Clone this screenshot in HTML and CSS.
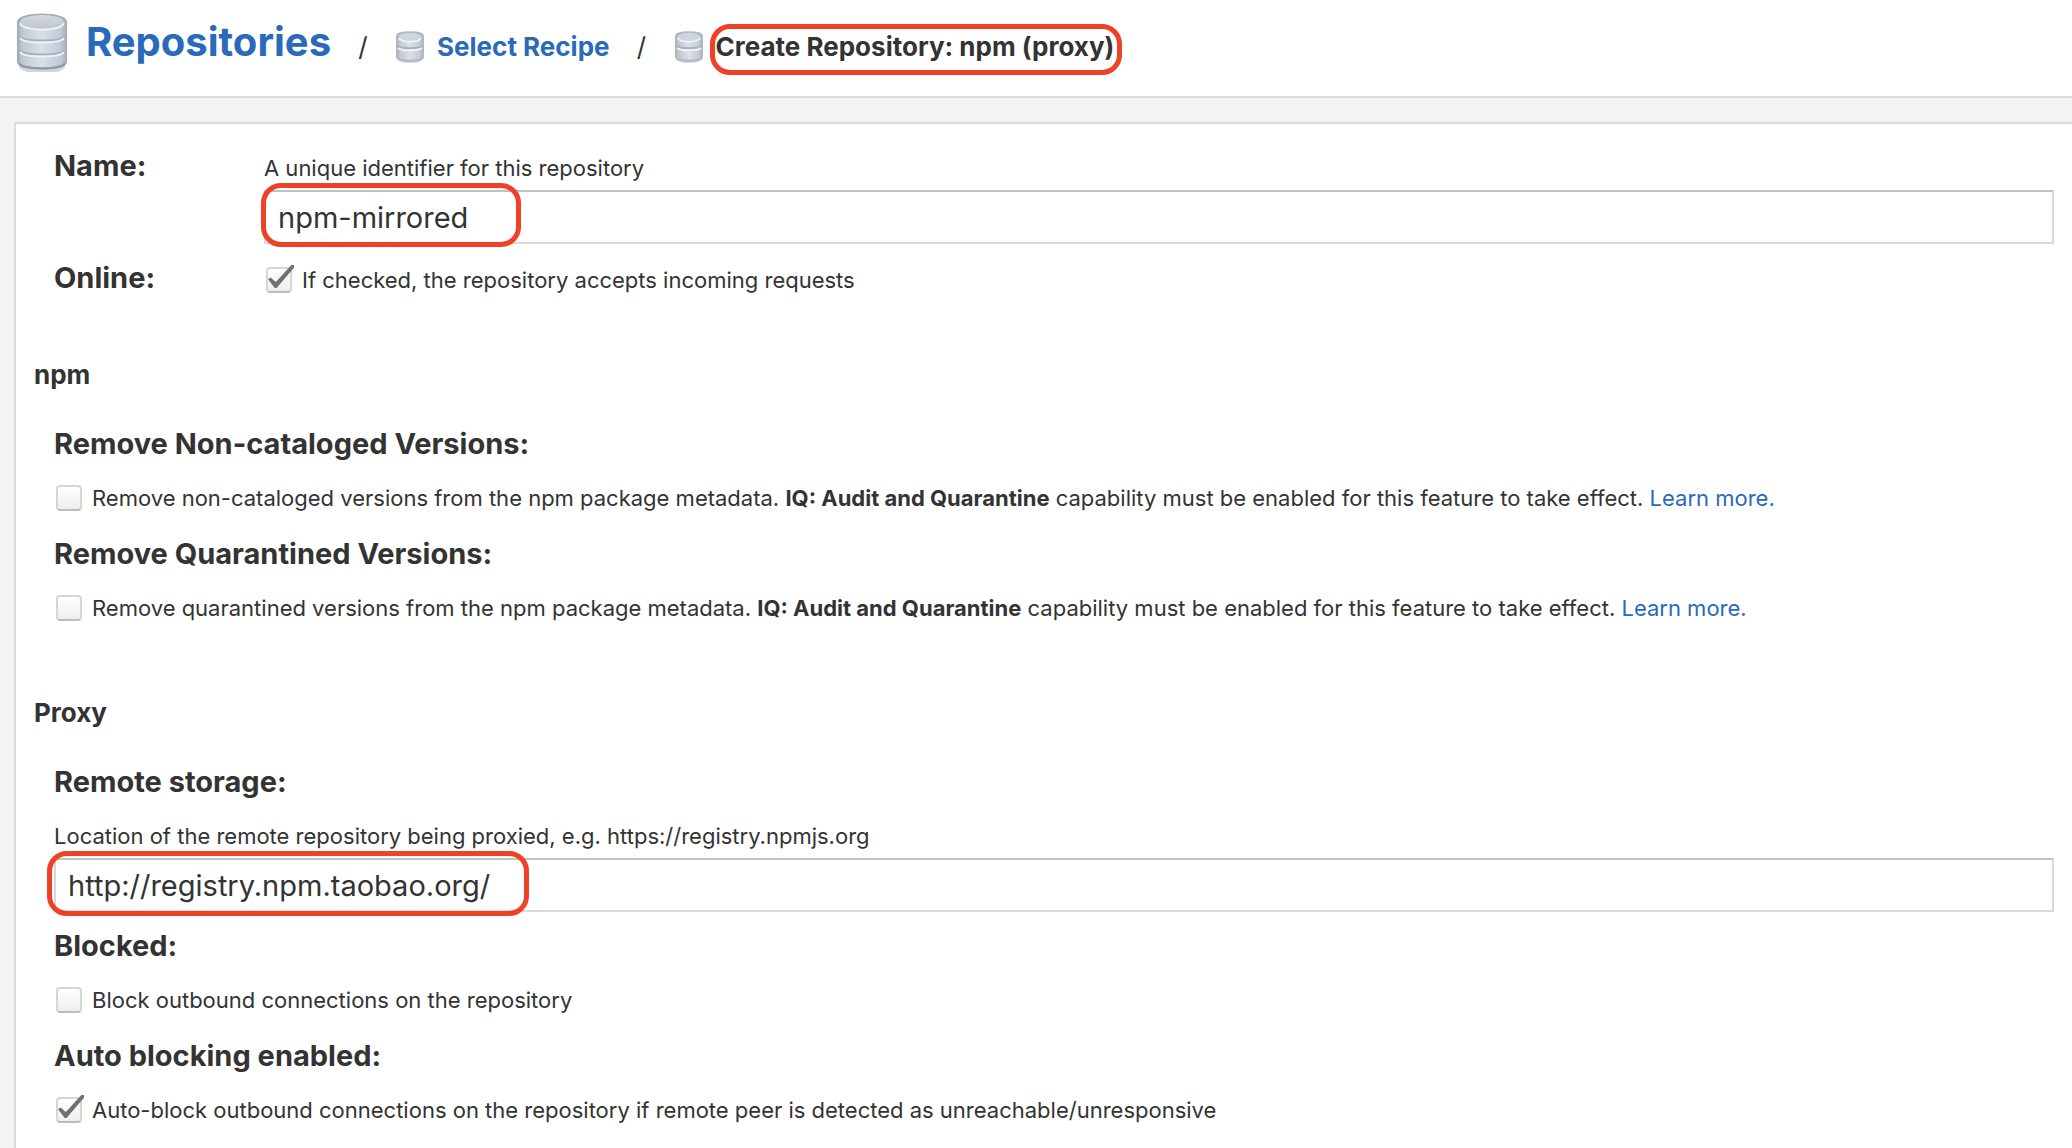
FILE: index.html
```html
<!DOCTYPE html>
<html lang="en">
<head>
<meta charset="utf-8">
<title>Create Repository: npm (proxy)</title>
<link rel="stylesheet" href="styles.css">
</head>
<body>
<svg class="defs" aria-hidden="true">
  <defs>
    <linearGradient id="side" x1="0" x2="1" y1="0" y2="0">
      <stop offset="0" stop-color="#adb5c0"/><stop offset="0.12" stop-color="#c3cad5"/><stop offset="0.5" stop-color="#dadfea"/><stop offset="0.88" stop-color="#c3cad5"/><stop offset="1" stop-color="#a9b2bc"/>
    </linearGradient>
    <linearGradient id="lid" x1="0" x2="0" y1="0" y2="1">
      <stop offset="0" stop-color="#d3d8de"/><stop offset="1" stop-color="#bcc6ce"/>
    </linearGradient>
  </defs>
  <symbol id="db-large" viewBox="0 0 52 60">
    <path d="M3 12v40c0 10 46 10 46 0V12z" fill="#7d8791" opacity=".35" transform="translate(0 2)"/>
    <path d="M2 10C2 0 50 0 50 10V50C50 59 2 59 2 50z" fill="url(#side)" stroke="#a3adb6" stroke-width="2"/>
    <ellipse cx="26" cy="10" rx="21" ry="7" fill="url(#lid)"/>
    <path d="M4 11c2 9 42 9 44 0" fill="none" stroke="#eef1f6" stroke-width="2"/>
    <g fill="none" stroke-width="2">
      <path d="M3 24c4 6 42 6 46 0M3 38c4 6 42 6 46 0" stroke="#a5afba"/>
      <path d="M4 26c4 6 40 6 44 0M4 40c4 6 40 6 44 0" stroke="#edf0f6"/>
      <path d="M3 51c2 7 44 7 46 0" stroke="#909aa3"/>
    </g>
  </symbol>
  <symbol id="db-small" viewBox="0 0 30 32">
    <path d="M2 8v18c0 7 26 7 26 0V8z" fill="#7d8791" opacity=".3" transform="translate(0 1)"/>
    <path d="M2 5C2 0 28 0 28 5V26C28 31 2 31 2 26z" fill="url(#side)" stroke="#b0b8c0" stroke-width="2"/>
    <ellipse cx="15" cy="6" rx="11" ry="4" fill="#cfd5dc"/>
    <path d="M4 7c2 5 20 5 22 0" fill="none" stroke="#eef1f6" stroke-width="2"/>
    <path d="M2 15c3 3 23 3 26 0" fill="none" stroke="#a9b2bc" stroke-width="2"/>
    <path d="M3 17c3 3 21 3 24 0" fill="none" stroke="#edf0f6" stroke-width="2"/>
  </symbol>
</svg>

<header class="header">
  <nav class="breadcrumb" aria-label="Breadcrumb">
    <a class="crumb crumb-root" href="#repositories"><svg class="icon-large" aria-hidden="true"><use href="#db-large"/></svg>Repositories</a>
    <span class="slash">/</span>
    <a class="crumb" href="#recipe"><svg class="icon-small" aria-hidden="true"><use href="#db-small"/></svg>Select Recipe</a>
    <span class="slash">/</span>
    <span class="crumb crumb-current"><svg class="icon-small" aria-hidden="true"><use href="#db-small"/></svg><span class="marked">Create Repository: npm (proxy)<span class="mark mark-title"></span></span></span>
  </nav>
</header>

<main class="panel">
  <form>
    <div class="row">
      <label class="label" for="name">Name:</label>
      <div>
        <div class="help">A unique identifier for this repository</div>
        <div class="marked"><input class="input" id="name" type="text" value="npm-mirrored"><span class="mark mark-name"></span></div>
      </div>
    </div>
    <div class="row">
      <div class="label">Online:</div>
      <label class="check"><input type="checkbox" checked><span class="help">If checked, the repository accepts incoming requests</span></label>
    </div>

    <section class="section">
      <h2 class="section-title">npm</h2>
      <div class="field">
        <div class="label">Remove Non-cataloged Versions:</div>
        <label class="check"><input type="checkbox"><span class="help">Remove non-cataloged versions from the npm package metadata. <b>IQ: Audit and Quarantine</b> capability must be enabled for this feature to take effect. <a href="#learn">Learn more.</a></span></label>
      </div>
      <div class="field">
        <div class="label">Remove Quarantined Versions:</div>
        <label class="check"><input type="checkbox"><span class="help">Remove quarantined versions from the npm package metadata. <b>IQ: Audit and Quarantine</b> capability must be enabled for this feature to take effect. <a href="#learn">Learn more.</a></span></label>
      </div>
    </section>

    <section class="section">
      <h2 class="section-title">Proxy</h2>
      <div class="field field-text">
        <label class="label" for="remote">Remote storage:</label>
        <div class="help">Location of the remote repository being proxied, e.g. https://registry.npmjs.org</div>
        <div class="marked"><input class="input" id="remote" type="text" value="http://registry.npm.taobao.org/"><span class="mark mark-url"></span></div>
      </div>
      <div class="field">
        <div class="label">Blocked:</div>
        <label class="check"><input type="checkbox"><span class="help">Block outbound connections on the repository</span></label>
      </div>
      <div class="field">
        <div class="label">Auto blocking enabled:</div>
        <label class="check"><input type="checkbox" checked><span class="help">Auto-block outbound connections on the repository if remote peer is detected as unreachable/unresponsive</span></label>
      </div>
    </section>
  </form>
</main>
</body>
</html>
```
FILE: styles.css
```css
* { box-sizing: border-box; }

body {
  margin: 0;
  min-height: 100vh;
  display: flex;
  flex-direction: column;
  background: #f3f3f3;
  color: #333;
  font: 22px/28px Inter, "Open Sans", sans-serif;
}

a { color: #2a6abb; text-decoration: none; }

.defs { position: absolute; width: 0; height: 0; }

/* Header */
.header {
  padding: 12px 16px 24px;
  background: #fff;
  border-bottom: 2px solid #dcdcdc;
}

.breadcrumb { display: flex; align-items: center; }

.crumb {
  display: flex;
  align-items: center;
  gap: 12px;
  padding-top: 10px;
  font-size: 26px;
  line-height: 32px;
  font-weight: 700;
  white-space: nowrap;
}

.crumb-root {
  gap: 18px;
  padding-top: 0;
  font-size: 40px;
  line-height: 48px;
}

.slash {
  width: 64px;
  padding-top: 10px;
  text-align: center;
  font-size: 26px;
  line-height: 32px;
}

.icon-large { width: 52px; height: 60px; }
.icon-small { width: 30px; height: 32px; }

/* Form */
.panel {
  flex: 1;
  margin: 24px 0 0 14px;
  padding: 24px 18px 22px 38px;
  background: #fff;
  border: solid #dcdcdc;
  border-width: 2px 0 0 2px;
}

.row {
  display: grid;
  grid-template-columns: 210px 1fr;
  align-items: baseline;
  margin-bottom: 16px;
}

.label {
  display: block;
  font-size: 29px;
  line-height: 36px;
  font-weight: 700;
}

.section { margin-top: 62px; }
.section + .section { margin-top: 74px; }

.section-title {
  margin: 0 0 34px -20px;
  font-size: 26px;
  line-height: 34px;
  font-weight: 700;
}

.field { margin-top: 24px; }
.field .label { margin-bottom: 22px; }
.field-text + .field { margin-top: 16px; }

.marked { position: relative; }
.help + .marked { margin-top: 8px; }

.input {
  display: block;
  width: 100%;
  height: 54px;
  padding: 0 12px;
  border: 2px solid #d9d9d9;
  border-top-color: #c0c0c0;
  background: #fff;
  color: #333;
  font: 29px/36px Inter, "Open Sans", sans-serif;
}

.check { display: flex; align-items: center; gap: 10px; }
.check .help { align-self: baseline; }

.check input {
  appearance: none;
  position: relative;
  flex: none;
  width: 26px;
  height: 26px;
  margin: 0 0 0 2px;
  border: 2px solid #d6d6d6;
  border-bottom-color: #bdbdbd;
  border-radius: 4px;
  background: linear-gradient(#fff, #eee);
}

.check input:checked::after {
  content: "";
  position: absolute;
  left: 0;
  top: -4px;
  width: 26px;
  height: 23px;
  background: #707070;
  clip-path: polygon(0 62%, 10% 54%, 30% 74%, 90% 0, 100% 0, 100% 12%, 33% 100%, 26% 100%);
}

/* Annotation outlines */
.mark {
  position: absolute;
  border: 5px solid #ee4126;
  border-radius: 20px;
  pointer-events: none;
}

.mark-title { inset: -7px -8px -12px -6px; }
.mark-name { left: -3px; top: -7px; width: 260px; height: 64px; }
.mark-url { left: -7px; top: -7px; width: 482px; height: 65px; }
```
